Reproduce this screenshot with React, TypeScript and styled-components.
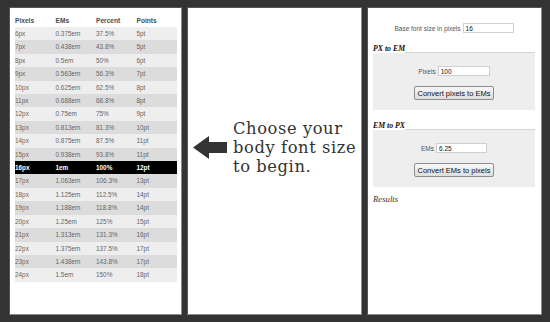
import styled, { createGlobalStyle } from "styled-components";

const GlobalStyle = createGlobalStyle`
  html, body {
    margin: 0;
    padding: 0;
    background: #333333;
  }
  * {
    box-sizing: border-box;
  }
`;

const rows = [
  ["6px", "0.375em", "37.5%", "5pt"],
  ["7px", "0.438em", "43.8%", "5pt"],
  ["8px", "0.5em", "50%", "6pt"],
  ["9px", "0.563em", "56.3%", "7pt"],
  ["10px", "0.625em", "62.5%", "8pt"],
  ["11px", "0.688em", "68.8%", "8pt"],
  ["12px", "0.75em", "75%", "9pt"],
  ["13px", "0.813em", "81.3%", "10pt"],
  ["14px", "0.875em", "87.5%", "11pt"],
  ["15px", "0.938em", "93.8%", "11pt"],
  ["16px", "1em", "100%", "12pt"],
  ["17px", "1.063em", "106.3%", "13pt"],
  ["18px", "1.125em", "112.5%", "14pt"],
  ["19px", "1.188em", "118.8%", "14pt"],
  ["20px", "1.25em", "125%", "15pt"],
  ["21px", "1.313em", "131.3%", "16pt"],
  ["22px", "1.375em", "137.5%", "17pt"],
  ["23px", "1.438em", "143.8%", "17pt"],
  ["24px", "1.5em", "150%", "18pt"],
];

export default function App() {
  return (
    <>
      <GlobalStyle />
      <Page>
        <Panel $width={173}>
          <SizeTable>
            <thead>
              <tr>
                <Head>Pixels</Head>
                <Head>EMs</Head>
                <Head>Percent</Head>
                <Head>Points</Head>
              </tr>
            </thead>
            <tbody>
              {rows.map((r, i) => (
                <Row key={r[0]} $dark={i % 2 === 1} $active={r[0] === "16px"}>
                  {r.map((c) => (
                    <Cell key={c}>{c}</Cell>
                  ))}
                </Row>
              ))}
            </tbody>
          </SizeTable>
        </Panel>

        <Panel $width={175}>
          <Prompt>
            <svg width="34" height="23" viewBox="0 0 34 23">
              <polygon
                points="0,11.5 16,0 16,6 34,6 34,17 16,17 16,23"
                fill="#333"
              />
            </svg>
            <PromptText>
              Choose your
              <br />
              body font size
              <br />
              to begin.
            </PromptText>
          </Prompt>
        </Panel>

        <Panel $width={175}>
          <Converter>
            <FieldRow>
              <Label>Base font size in pixels</Label>
              <TextInput $width={51} defaultValue="16" />
            </FieldRow>

            <Group>
              <LegendRow>
                <Legend>PX to EM</Legend>
                <Rule />
              </LegendRow>
              <GroupBody>
                <FieldRow>
                  <Label>Pixels</Label>
                  <TextInput $width={52} defaultValue="100" />
                </FieldRow>
                <Button>Convert pixels to EMs</Button>
              </GroupBody>
            </Group>

            <Group>
              <LegendRow>
                <Legend>EM to PX</Legend>
                <Rule />
              </LegendRow>
              <GroupBody>
                <FieldRow>
                  <Label>EMs</Label>
                  <TextInput $width={51} defaultValue="6.25" />
                </FieldRow>
                <Button>Convert EMs to pixels</Button>
              </GroupBody>
            </Group>

            <Results>Results</Results>
          </Converter>
        </Panel>
      </Page>
    </>
  );
}

const Page = styled.div`
  display: flex;
  gap: 5px;
  width: 550px;
  height: 322px;
  padding: 7px 7px 7px 9px;
`;

const Panel = styled.div<{ $width: number }>`
  width: ${(p) => p.$width}px;
  height: 308px;
  flex: none;
  background: #fff;
  border: 1px solid #8a8a8a;
  border-top-color: #555;
  border-left-color: #555;
`;

const SizeTable = styled.table`
  border-collapse: collapse;
  margin: 5px 0 0 5px;
  width: 162px;
  font-family: "Liberation Sans", Arial, sans-serif;
  table-layout: fixed;
`;

const Head = styled.th`
  text-align: left;
  font-size: 6.6px;
  font-weight: bold;
  color: #444c55;
  height: 14px;
  padding: 0;
  width: 25%;
`;

const Row = styled.tr<{ $dark: boolean; $active: boolean }>`
  height: 13.4px;
  background: ${(p) => (p.$active ? "#000" : p.$dark ? "#dcdcdc" : "#eeeeee")};
  color: ${(p) => (p.$active ? "#fff" : "#666")};
  font-weight: ${(p) => (p.$active ? "bold" : "normal")};
`;

const Cell = styled.td`
  font-size: 6.4px;
  padding: 0;
  line-height: 13.4px;
  white-space: nowrap;
`;

const Prompt = styled.div`
  display: flex;
  align-items: center;
  gap: 6px;
  padding: 111px 0 0 5px;
`;

const PromptText = styled.div`
  font-family: "DejaVu Serif", Georgia, serif;
  font-size: 16.3px;
  letter-spacing: 0.6px;
  line-height: 19px;
  color: #333;
`;

const Converter = styled.div`
  display: flex;
  flex-direction: column;
  padding: 15px 6px 0 5px;
`;

const FieldRow = styled.div`
  display: flex;
  justify-content: center;
  align-items: center;
  gap: 2px;
`;

const Label = styled.span`
  font-family: "Liberation Sans", Arial, sans-serif;
  font-size: 6.5px;
  color: #555;
`;

const TextInput = styled.input<{ $width: number }>`
  width: ${(p) => p.$width}px;
  height: 10px;
  border: 1px solid #cfcfcf;
  padding: 0 2px;
  font-family: "Liberation Sans", Arial, sans-serif;
  font-size: 6.5px;
  color: #111;
  background: #fff;
  outline: none;
`;

const Group = styled.div`
  display: flex;
  flex-direction: column;
  margin-top: 12px;
`;

const LegendRow = styled.div`
  display: flex;
  align-items: flex-end;
  height: 8px;
`;

const Legend = styled.span`
  font-family: "Liberation Serif", "Times New Roman", serif;
  font-style: italic;
  font-weight: bold;
  font-size: 7.8px;
  line-height: 8px;
  color: #111;
`;

const Rule = styled.div`
  flex: 1;
  border-bottom: 1px solid #d4d4d4;
`;

const GroupBody = styled.div`
  display: flex;
  flex-direction: column;
  align-items: center;
  gap: 10px;
  background: #eeeeee;
  padding: 13px 0 10px;
`;

const Button = styled.button`
  height: 14px;
  padding: 0 3px;
  font-family: "Liberation Sans", Arial, sans-serif;
  font-size: 7.5px;
  color: #111;
  background: linear-gradient(#f7f7f7, #dedede);
  border: 1px solid #8c8c8c;
  border-radius: 2px;
`;

const Results = styled.div`
  margin-top: 7px;
  font-family: "Liberation Serif", "Times New Roman", serif;
  font-style: italic;
  font-size: 8.7px;
  color: #333;
`;
